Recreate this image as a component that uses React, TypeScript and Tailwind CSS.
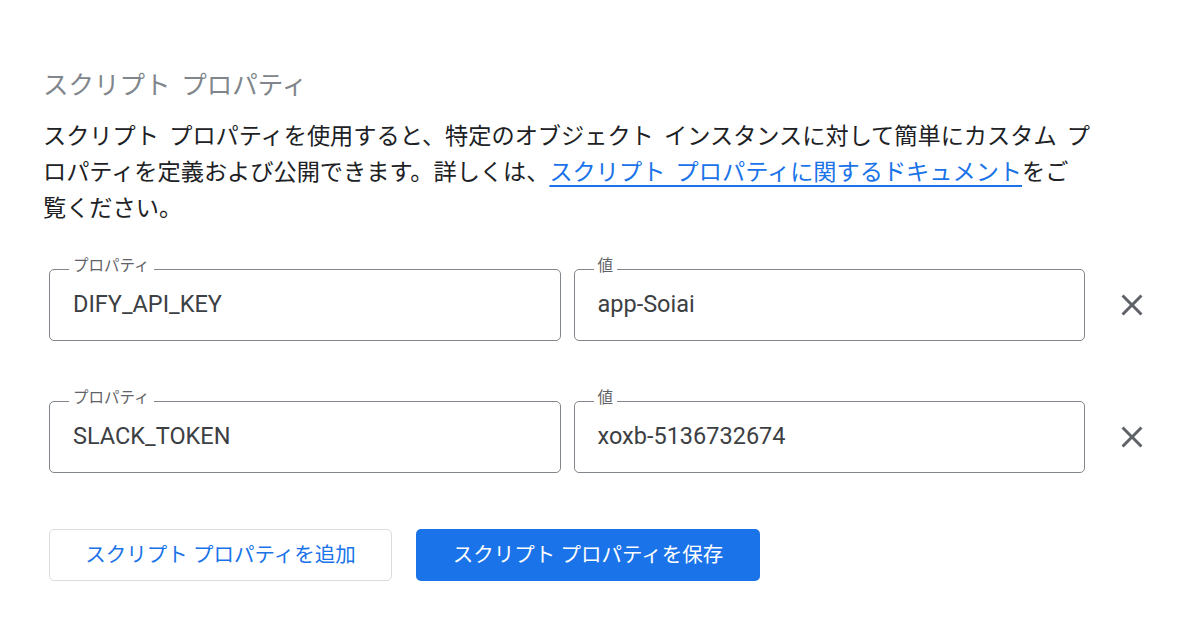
const properties = [
  { key: "DIFY_API_KEY", value: "app-Soiai" },
  { key: "SLACK_TOKEN", value: "xoxb-5136732674" },
];

const OutlinedField = ({ label, value }: { label: string; value: string }) => (
  <div className="relative h-[72px] flex-1 rounded-[5px] border border-[#80868b]">
    <span className="absolute -top-[15px] left-[19px] bg-white px-[4px] text-[15.5px] leading-[22px] text-[#5f6368]">
      {label}
    </span>
    <div className="flex h-full items-center px-[23px] text-[23.5px] text-[#3c4043]">
      {value}
    </div>
  </div>
);

const CloseIcon = () => (
  <button className="ml-[29px] flex h-[36px] w-[36px] items-center justify-center text-[#5f6368]">
    <svg viewBox="0 0 24 24" width="36" height="36" fill="currentColor">
      <path d="M19 6.41 17.59 5 12 10.59 6.41 5 5 6.41 10.59 12 5 17.59 6.41 19 12 13.41 17.59 19 19 17.59 13.41 12z" />
    </svg>
  </button>
);

const App = () => {
  return (
    <div
      className="min-h-screen bg-white pl-[43px] pt-[69px] [word-spacing:4.5px]"
      style={{ fontFamily: '"Roboto", "Noto Sans CJK JP", sans-serif' }}
    >
      {/* Title */}
      <h2 className="text-[25.5px] leading-[32px] text-[#80868b]">
        スクリプト プロパティ
      </h2>

      {/* Description */}
      <p className="mt-[17px] text-[23.2px] leading-[36px] text-[#202124]">
        スクリプト プロパティを使用すると、特定のオブジェクト インスタンスに対して簡単にカスタム プ
        <br />
        ロパティを定義および公開できます。詳しくは、
        <a className="text-[#1a73e8] underline underline-offset-[5px]" href="#">
          スクリプト プロパティに関するドキュメント
        </a>
        をご
        <br />
        覧ください。
      </p>

      {/* Properties */}
      <div className="ml-[6px] mt-[43px] flex w-[1101px] flex-col gap-[60px]">
        {properties.map((p) => (
          <div key={p.key} className="flex items-center">
            <div className="flex flex-1 gap-[13px]">
              <OutlinedField label="プロパティ" value={p.key} />
              <OutlinedField label="値" value={p.value} />
            </div>
            <CloseIcon />
          </div>
        ))}
      </div>

      {/* Buttons */}
      <div className="ml-[6px] mt-[56px] flex gap-[24px]">
        <button className="h-[52px] w-[343px] rounded-[5px] border border-[#dadce0] bg-white text-[20.5px] text-[#1a73e8]">
          スクリプト プロパティを追加
        </button>
        <button className="h-[52px] w-[344px] rounded-[5px] bg-[#1a73e8] text-[20.5px] text-white">
          スクリプト プロパティを保存
        </button>
      </div>
    </div>
  );
};

export default App;
